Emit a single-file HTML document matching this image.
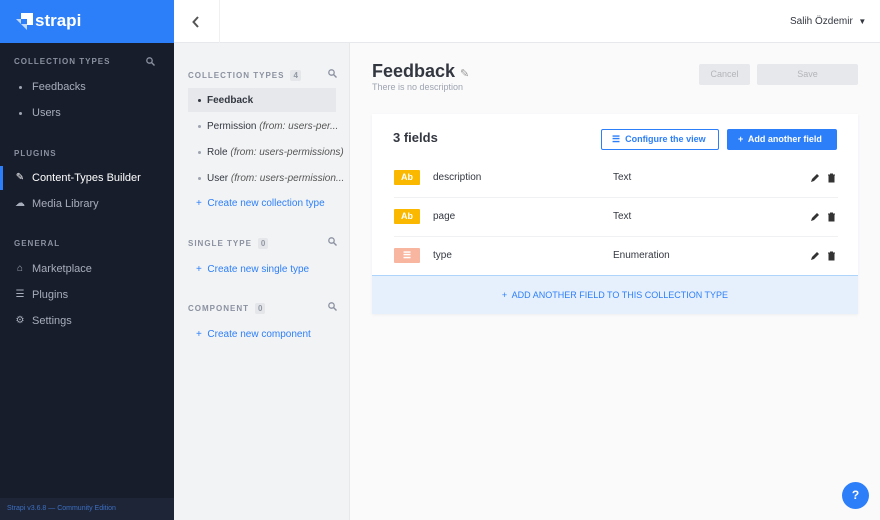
<!DOCTYPE html>
<html><head><meta charset="utf-8"><style>
*{box-sizing:border-box;margin:0;padding:0}
body{width:880px;height:520px;overflow:hidden;font-family:"Liberation Sans",sans-serif;background:#fafafb;position:relative;font-size:11px;color:#333740}
.abs{position:absolute}
#side{left:0;top:0;width:174px;height:520px;background:#171d2b}
#logo{left:0;top:0;width:174px;height:43px;background:#2d7ff9;color:#fff;font-size:17px;font-weight:bold}
.sh{color:#8b91a0;font-size:8px;letter-spacing:1px;font-weight:bold}
.si{color:#a8adbb;font-size:11px}
.ic{position:absolute;left:14px;width:12px;text-align:center;font-size:10px}
.tx{position:absolute;left:32px;white-space:nowrap}
.mid{left:174px;top:43px;width:176px;height:477px;background:#f2f3f5;border-right:1px solid #e6e8ec}
.mh{color:#8b91a0;font-size:8px;letter-spacing:1px;font-weight:bold;white-space:nowrap}
.badge{display:inline-block;background:#e4e6ea;color:#9197a3;padding:1px 3px;border-radius:2px;margin-left:6px;letter-spacing:0}
.mi{color:#333740;font-size:10px;white-space:nowrap}
.mi i{color:#555}
.link{color:#2d7ff9;font-size:10px}
.dot{display:inline-block;width:3px;height:3px;border-radius:50%;background:#9ea4b0;margin-right:8px;vertical-align:middle}
.row{left:22px;width:444px;height:39px;border-bottom:1px solid #f0f1f3}
.tag{left:0;top:11px;width:26px;height:15px;background:#fab800;color:#fff;font-weight:bold;font-size:9px;text-align:center;line-height:15px;border-radius:1px}
.act{position:absolute;left:416px;top:14px}
</style></head><body>
<div id="side" class="abs">
<div id="logo" class="abs"><svg class="abs" style="left:16px;top:13px" width="17" height="17" viewBox="0 0 17 17"><path d="M5 0h12v12h-6V6H5z" fill="#fff"/><path d="M0 6h5v5z M5 11h6v6z" fill="#fff" opacity=".7"/></svg><span class="abs" style="left:35px;top:11px">strapi</span></div>
<div class="abs sh" style="left:14px;top:57px">COLLECTION TYPES</div>
<svg class="abs" style="left:146px;top:57px" width="9" height="9"><circle cx="3.5" cy="3.5" r="2.7" stroke="#8b91a0" fill="none" stroke-width="1.3"/><path d="M5.5 5.5L8.5 8.5" stroke="#8b91a0" stroke-width="1.4"/></svg>
<div class="abs si" style="left:0;top:81px;width:174px;height:14px"><span class="dot abs" style="left:19px;top:5px"></span><span class="tx">Feedbacks</span></div>
<div class="abs si" style="left:0;top:107px;width:174px;height:14px"><span class="dot abs" style="left:19px;top:5px"></span><span class="tx">Users</span></div>
<div class="abs sh" style="left:14px;top:149px">PLUGINS</div>
<div class="abs" style="left:0;top:166px;width:3px;height:24px;background:#2d7ff9"></div>
<div class="abs si" style="left:0;top:172px;width:174px;height:14px;color:#fff"><span class="ic">✎</span><span class="tx">Content-Types Builder</span></div>
<div class="abs si" style="left:0;top:198px;width:174px;height:14px"><span class="ic">☁</span><span class="tx">Media Library</span></div>
<div class="abs sh" style="left:14px;top:239px">GENERAL</div>
<div class="abs si" style="left:0;top:263px;width:174px;height:14px"><span class="ic">⌂</span><span class="tx">Marketplace</span></div>
<div class="abs si" style="left:0;top:289px;width:174px;height:14px"><span class="ic">☰</span><span class="tx">Plugins</span></div>
<div class="abs si" style="left:0;top:315px;width:174px;height:14px"><span class="ic">⚙</span><span class="tx">Settings</span></div>
<div class="abs" style="left:0;top:498px;width:174px;height:22px;background:#1e2536"></div>
<div class="abs" style="left:7px;top:505px;font-size:7px;color:#3b6fc4">Strapi v3.6.8 — Community Edition</div>
</div>
<div class="abs" style="left:174px;top:0;width:706px;height:43px;background:#fff;border-bottom:1px solid #e6e8ec"></div>
<div class="abs" style="left:219px;top:0;width:1px;height:43px;background:#f0f0f0"></div>
<svg class="abs" style="left:192px;top:16px" width="8" height="12"><path d="M6 1L1.5 6 6 11" stroke="#555" stroke-width="2" fill="none"/></svg>
<div class="abs" style="left:790px;top:16px;font-size:10px;color:#333740">Salih Özdemir &nbsp;<span style="font-size:8px">▼</span></div>
<div class="abs mid">
<div class="abs mh" style="left:14px;top:27px">COLLECTION TYPES<span class="badge">4</span></div>
<svg class="abs" style="left:154px;top:26px" width="9" height="9"><circle cx="3.5" cy="3.5" r="2.7" stroke="#8b91a0" fill="none" stroke-width="1.3"/><path d="M5.5 5.5L8.5 8.5" stroke="#8b91a0" stroke-width="1.4"/></svg>
<div class="abs" style="left:14px;top:45px;width:148px;height:24px;background:#e6e8eb"></div>
<div class="abs mi" style="left:24px;top:52px;font-weight:bold"><span class="dot" style="background:#333740;margin-right:6px"></span>Feedback</div>
<div class="abs mi" style="left:24px;top:78px"><span class="dot" style="margin-right:6px"></span>Permission <i>(from: users-per...</i></div>
<div class="abs mi" style="left:24px;top:104px"><span class="dot" style="margin-right:6px"></span>Role <i>(from: users-permissions)</i></div>
<div class="abs mi" style="left:24px;top:130px"><span class="dot" style="margin-right:6px"></span>User <i>(from: users-permission...</i></div>
<div class="abs link" style="left:22px;top:155px">+&nbsp; Create new collection type</div>
<div class="abs mh" style="left:14px;top:195px">SINGLE TYPE<span class="badge">0</span></div>
<svg class="abs" style="left:154px;top:194px" width="9" height="9"><circle cx="3.5" cy="3.5" r="2.7" stroke="#8b91a0" fill="none" stroke-width="1.3"/><path d="M5.5 5.5L8.5 8.5" stroke="#8b91a0" stroke-width="1.4"/></svg>
<div class="abs link" style="left:22px;top:221px">+&nbsp; Create new single type</div>
<div class="abs mh" style="left:14px;top:260px">COMPONENT<span class="badge">0</span></div>
<svg class="abs" style="left:154px;top:259px" width="9" height="9"><circle cx="3.5" cy="3.5" r="2.7" stroke="#8b91a0" fill="none" stroke-width="1.3"/><path d="M5.5 5.5L8.5 8.5" stroke="#8b91a0" stroke-width="1.4"/></svg>
<div class="abs link" style="left:22px;top:286px">+&nbsp; Create new component</div>
</div>
<div class="abs" style="left:372px;top:61px;font-size:18px;font-weight:bold;color:#333740">Feedback <span style="font-size:11px;color:#999;font-weight:normal">✎</span></div>
<div class="abs" style="left:372px;top:82px;font-size:9px;color:#9ea4b0">There is no description</div>
<div class="abs" style="left:699px;top:64px;width:51px;height:21px;background:#e6e8eb;border-radius:2px;color:#b3b5b9;font-size:9px;text-align:center;line-height:21px">Cancel</div>
<div class="abs" style="left:757px;top:64px;width:101px;height:21px;background:#e6e8eb;border-radius:2px;color:#b3b5b9;font-size:9px;text-align:center;line-height:21px">Save</div>
<div class="abs" style="left:372px;top:114px;width:486px;height:200px;background:#fff;box-shadow:0 1px 3px rgba(0,0,0,.05)">
<div class="abs" style="left:21px;top:16px;font-size:13px;font-weight:bold">3 fields</div>
<div class="abs" style="left:229px;top:15px;width:118px;height:21px;border:1px solid #2d7ff9;border-radius:2px;color:#2d7ff9;font-size:9px;font-weight:bold;line-height:19px;padding-left:10px">☰&nbsp; Configure the view</div>
<div class="abs" style="left:355px;top:15px;width:110px;height:21px;background:#2d7ff9;border-radius:2px;color:#fff;font-size:9px;font-weight:bold;line-height:21px;padding-left:11px">+&nbsp; Add another field</div>
<div class="abs row" style="top:45px"><div class="abs tag">Ab</div><div class="abs" style="left:39px;top:13px;font-size:10px">description</div><div class="abs" style="left:219px;top:13px;font-size:10px">Text</div><svg class="act" width="26" height="10"><path d="M1 9l1-3 5-5 2 2-5 5z" fill="#333"/><path d="M18 2h7M20 1h3M19 3h5v6h-5z" stroke="#333" stroke-width="1" fill="#333"/></svg></div>
<div class="abs row" style="top:84px"><div class="abs tag">Ab</div><div class="abs" style="left:39px;top:13px;font-size:10px">page</div><div class="abs" style="left:219px;top:13px;font-size:10px">Text</div><svg class="act" width="26" height="10"><path d="M1 9l1-3 5-5 2 2-5 5z" fill="#333"/><path d="M18 2h7M20 1h3M19 3h5v6h-5z" stroke="#333" stroke-width="1" fill="#333"/></svg></div>
<div class="abs row" style="top:123px;border:0"><div class="abs tag" style="background:#f8b6a0">☰</div><div class="abs" style="left:39px;top:13px;font-size:10px">type</div><div class="abs" style="left:219px;top:13px;font-size:10px">Enumeration</div><svg class="act" width="26" height="10"><path d="M1 9l1-3 5-5 2 2-5 5z" fill="#333"/><path d="M18 2h7M20 1h3M19 3h5v6h-5z" stroke="#333" stroke-width="1" fill="#333"/></svg></div>
<div class="abs" style="left:0;top:161px;width:486px;height:39px;background:#e6f0fd;border-top:1px solid #aed4fb;color:#2d7ff9;font-size:9px;text-align:center;line-height:38px">+&nbsp; ADD ANOTHER FIELD TO THIS COLLECTION TYPE</div>
</div>
<div class="abs" style="left:842px;top:482px;width:27px;height:27px;border-radius:50%;background:#2d7ff9;color:#fff;font-weight:bold;font-size:12px;text-align:center;line-height:27px">?</div>
</body></html>
